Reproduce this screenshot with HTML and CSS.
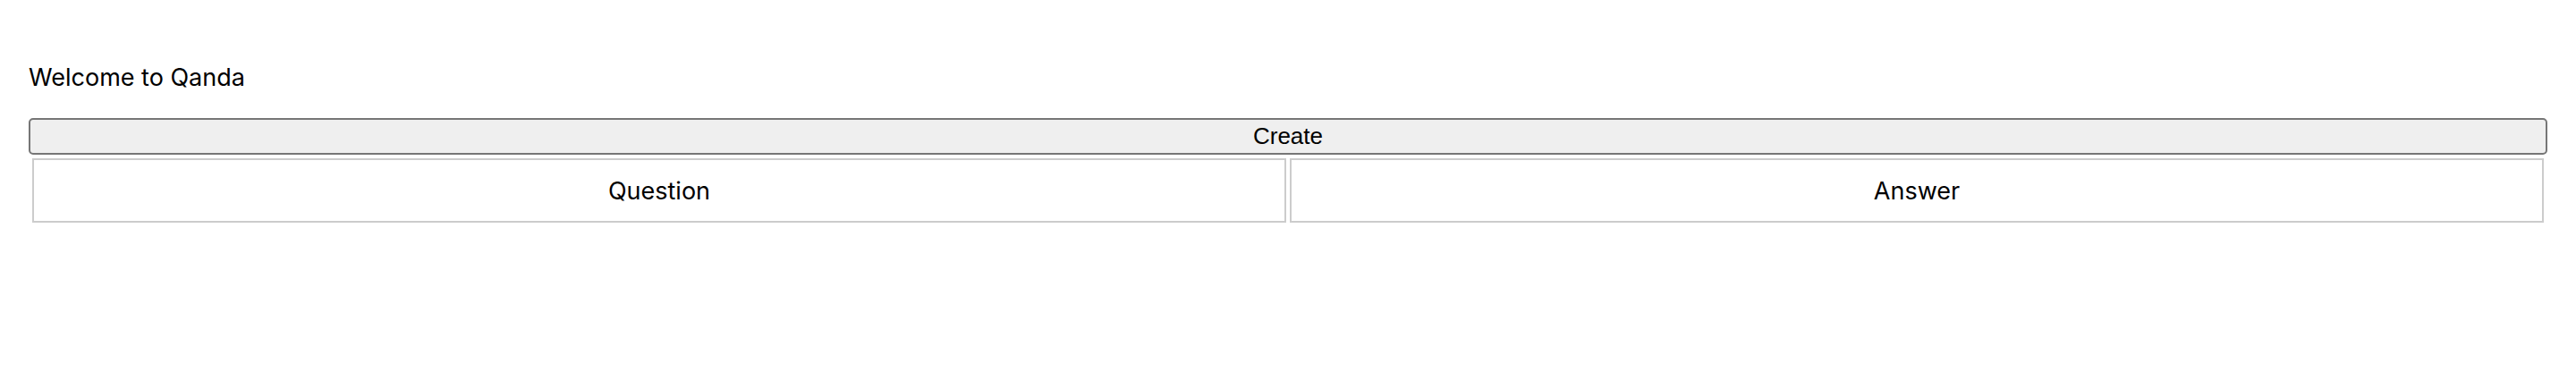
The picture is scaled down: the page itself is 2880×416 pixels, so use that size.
FILE: index.html
```html
<!DOCTYPE html>
<html lang="en">
<head>
<meta charset="utf-8">
<title>Qanda</title>
<link rel="stylesheet" href="styles.css">
</head>
<body>
<main class="app">
  <p class="welcome">Welcome to Qanda</p>
  <button class="create-btn" type="button">Create</button>
  <table class="qa-table">
    <thead>
      <tr>
        <th class="qa-cell">Question</th>
        <th class="qa-cell">Answer</th>
      </tr>
    </thead>
  </table>
</main>
</body>
</html>
```

FILE: styles.css
```css
html, body {
  margin: 0;
  padding: 0;
  background: #ffffff;
}

.app {
  display: flex;
  flex-direction: column;
  padding: 0 32px;
  font-family: Inter, "Liberation Sans", sans-serif;
  color: #000000;
}

.welcome {
  margin: 70px 0 28px;
  font-size: 27px;
  line-height: 34px;
}

.create-btn {
  box-sizing: border-box;
  width: 100%;
  height: 41px;
  margin: 0;
  padding: 0;
  background: #efefef;
  border: 2px solid #767676;
  border-radius: 5px;
  font-family: "Liberation Sans", Arial, sans-serif;
  font-size: 26px;
  color: #000000;
}

.qa-table {
  width: 100%;
  border-collapse: separate;
  border-spacing: 4px;
}

.qa-cell {
  box-sizing: border-box;
  width: 50%;
  height: 72px;
  padding: 0;
  border: 2px solid #cccccc;
  font-weight: normal;
  font-size: 27px;
  text-align: center;
  vertical-align: middle;
}
```
